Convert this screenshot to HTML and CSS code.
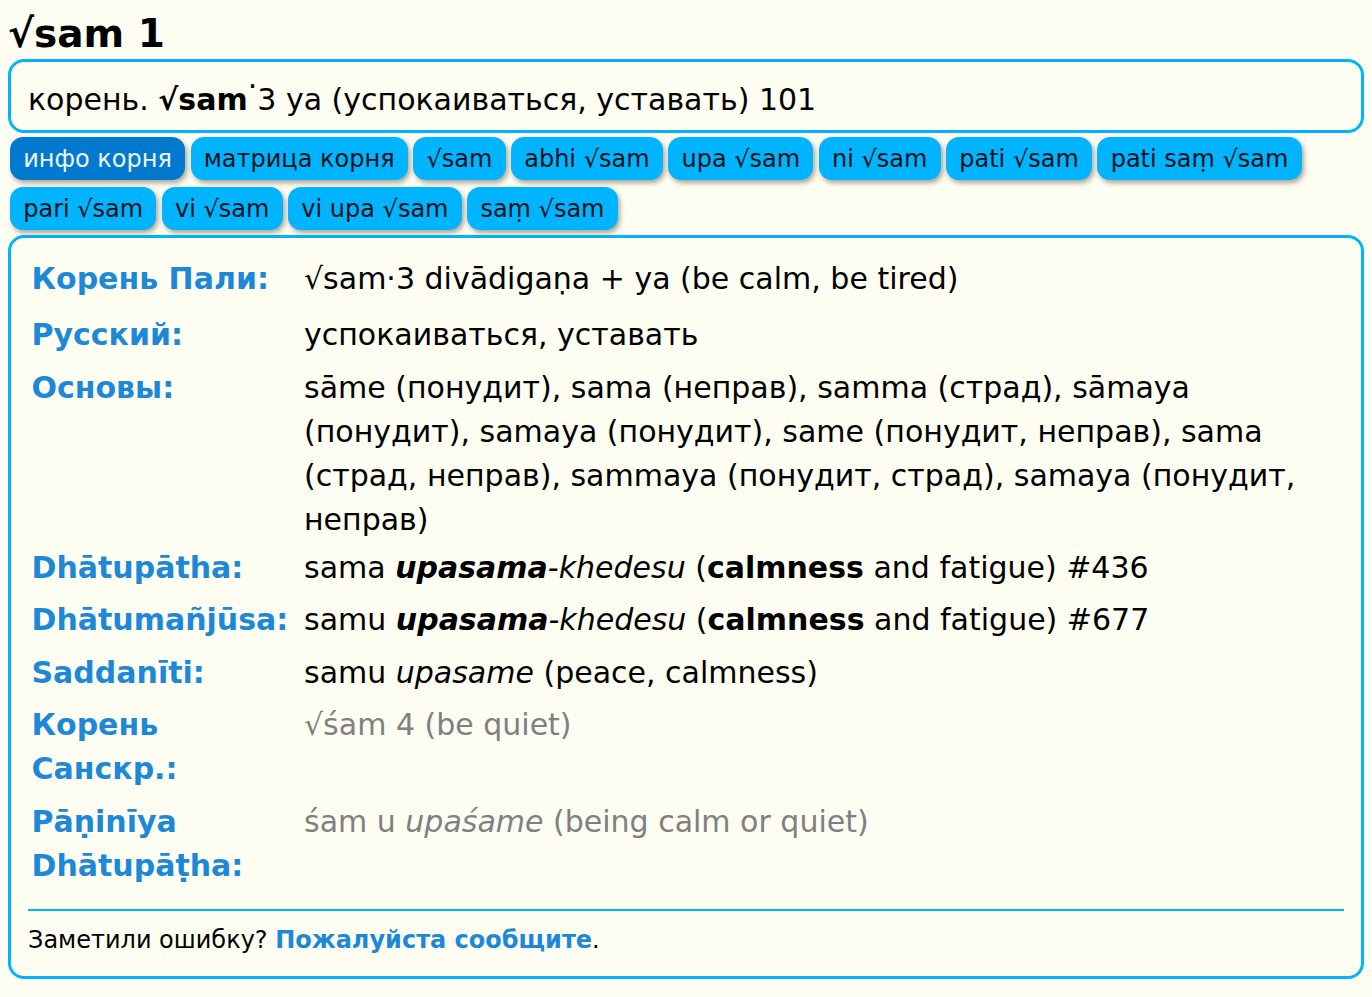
FILE: index.html
```html
<!DOCTYPE html>
<html lang="ru">
<head>
<meta charset="utf-8">
<title>√sam 1</title>
<link rel="stylesheet" href="styles.css">
</head>
<body>
<h1 class="title">√sam 1</h1>
<div class="summary">корень. <b>√sam</b><span class="raised">·</span>3 ya (успокаиваться, уставать) 101</div>
<div class="tabs">
  <span class="tab active">инфо корня</span>
  <span class="tab">матрица корня</span>
  <span class="tab">√sam</span>
  <span class="tab">abhi √sam</span>
  <span class="tab">upa √sam</span>
  <span class="tab">ni √sam</span>
  <span class="tab">pati √sam</span>
  <span class="tab">pati saṃ √sam</span>
  <span class="tab">pari √sam</span>
  <span class="tab">vi √sam</span>
  <span class="tab">vi upa √sam</span>
  <span class="tab">saṃ √sam</span>
</div>
<div class="card">
  <div class="info">
    <div class="row first">
      <div class="label">Корень Пали:</div>
      <div class="value">√sam·3 divādigaṇa + ya (be calm, be tired)</div>
    </div>
    <div class="row">
      <div class="label">Русский:</div>
      <div class="value">успокаиваться, уставать</div>
    </div>
    <div class="row tight">
      <div class="label">Основы:</div>
      <div class="value">sāme (понудит), sama (неправ), samma (страд), sāmaya (понудит), samaya (понудит), same (понудит, неправ), sama (страд, неправ), sammaya (понудит, страд), samaya (понудит, неправ)</div>
    </div>
    <div class="row">
      <div class="label">Dhātupātha:</div>
      <div class="value">sama <b><i>upasama</i></b><i>-khedesu</i> (<b>calmness</b> and fatigue) #436</div>
    </div>
    <div class="row">
      <div class="label">Dhātumañjūsa:</div>
      <div class="value">samu <b><i>upasama</i></b><i>-khedesu</i> (<b>calmness</b> and fatigue) #677</div>
    </div>
    <div class="row">
      <div class="label">Saddanīti:</div>
      <div class="value">samu <i>upasame</i> (peace, calmness)</div>
    </div>
    <div class="row">
      <div class="label">Корень Санскр.:</div>
      <div class="value muted">√śam 4 (be quiet)</div>
    </div>
    <div class="row">
      <div class="label">Pāṇinīya Dhātupāṭha:</div>
      <div class="value muted">śam u <i>upaśame</i> (being calm or quiet)</div>
    </div>
  </div>
  <div class="divider"></div>
  <div class="footer">Заметили ошибку? <a class="report" href="#">Пожалуйста сообщите</a>.</div>
</div>
</body>
</html>
```
FILE: styles.css
```css
html, body {
  background: #fdfdf2;
}
body {
  margin: 8px;
  font-family: "DejaVu Sans", sans-serif;
  color: #000;
}
.title {
  margin: 0;
  padding-top: 1px;
  font-size: 39px;
  line-height: 49px;
  font-weight: bold;
}
.summary {
  margin-top: 1px;
  border: 3px solid #00b4ff;
  border-radius: 16px;
  padding: 16px 17px 8px;
  font-size: 30px;
  line-height: 44px;
}
.raised {
  position: relative;
  top: -0.45em;
}
.tabs {
  display: flex;
  flex-wrap: wrap;
  gap: 7px 5.5px;
  padding: 4px 0 5px 2px;
}
.tab {
  display: inline-block;
  background: #00b4ff;
  color: #0b1217;
  font-size: 24px;
  line-height: 28px;
  padding: 7.5px 13.2px;
  border-radius: 13px;
  box-shadow: 2px 3px 5px rgba(70, 60, 40, 0.45);
  white-space: nowrap;
}
.tab.active {
  background: #0079cf;
  color: #eef6ff;
}
.card {
  border: 3px solid #00b4ff;
  border-radius: 16px;
}
.info {
  padding: 15px 17px 0;
}
.row {
  display: grid;
  grid-template-columns: 276px 1fr;
  padding: 4px 0 4.5px;
  font-size: 30px;
  line-height: 44px;
}
.row.first {
  padding-bottom: 8px;
}
.row.tight {
  padding-bottom: 0;
}
.label {
  padding: 0 12px 0 3.5px;
  font-weight: bold;
  color: #1e88d8;
}
.value.muted {
  color: #808080;
}
.divider {
  margin: 17px 17px 0;
  border-top: 2px solid #00b4ff;
}
.footer {
  margin-top: 10.5px;
  padding: 0 17px 18px;
  font-size: 24px;
  line-height: 36px;
}
.report {
  color: #1e88d8;
  font-weight: bold;
  text-decoration: none;
}
```
